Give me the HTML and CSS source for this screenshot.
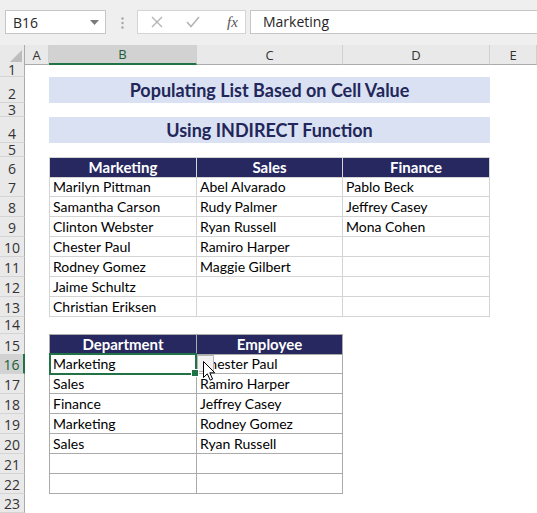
FILE: index.html
```html
<!DOCTYPE html>
<html lang="en">
<head>
    <meta charset="UTF-8">
    <title>Populating List Based on Cell Value</title>
    <link rel="stylesheet" href="styles.css">
</head>
<body>
    <!-- Barra de fórmulas -->
    <div class="toolbar">
        <div class="namebox">
            <span>B16</span>
            <svg width="9" height="5" viewBox="0 0 9 5"><path d="M0 0 L9 0 L4.5 5 Z" fill="#7a7a7a"/></svg>
        </div>
        <svg class="dots" width="3" height="12" viewBox="0 0 3 12">
            <circle cx="1.5" cy="1.5" r="1.2" fill="#a6a6a6"/>
            <circle cx="1.5" cy="6" r="1.2" fill="#a6a6a6"/>
            <circle cx="1.5" cy="10.5" r="1.2" fill="#a6a6a6"/>
        </svg>
        <div class="fxbox">
            <svg width="12" height="12" viewBox="0 0 12 12"><path d="M1 1 L11 11 M11 1 L1 11" stroke="#b4b4b4" stroke-width="1.4" fill="none"/></svg>
            <svg width="14" height="12" viewBox="0 0 14 12"><path d="M1 6 L5 10.5 L13 1" stroke="#b4b4b4" stroke-width="1.6" fill="none"/></svg>
            <span class="fx">fx</span>
        </div>
        <div class="formula">Marketing</div>
    </div>

    <!-- Hoja de cálculo -->
    <div class="sheet">
        <div class="row hh">
            <div class="ch corner">
                <svg width="12" height="12" viewBox="0 0 12 12"><path d="M12 0 L12 12 L0 12 Z" fill="#bdbdbd"/></svg>
            </div>
            <div class="ch">A</div>
            <div class="ch sel">B</div>
            <div class="ch">C</div>
            <div class="ch">D</div>
            <div class="ch">E</div>
        </div>

        <div class="row h13"><div class="rh">1</div></div>
        <div class="row h26">
            <div class="rh">2</div><div></div>
            <div class="title">Populating List Based on Cell Value</div>
        </div>
        <div class="row h14"><div class="rh">3</div></div>
        <div class="row h26">
            <div class="rh">4</div><div></div>
            <div class="title">Using INDIRECT Function</div>
        </div>
        <div class="row h14"><div class="rh">5</div></div>

        <!-- Tabla de empleados por departamento -->
        <div class="row">
            <div class="rh">6</div><div></div>
            <div class="c t1 hd first">Marketing</div>
            <div class="c t1 hd">Sales</div>
            <div class="c t1 hd">Finance</div>
        </div>
        <div class="row">
            <div class="rh">7</div><div></div>
            <div class="c t1 first">Marilyn Pittman</div>
            <div class="c t1">Abel Alvarado</div>
            <div class="c t1">Pablo Beck</div>
        </div>
        <div class="row">
            <div class="rh">8</div><div></div>
            <div class="c t1 first">Samantha Carson</div>
            <div class="c t1">Rudy Palmer</div>
            <div class="c t1">Jeffrey Casey</div>
        </div>
        <div class="row">
            <div class="rh">9</div><div></div>
            <div class="c t1 first">Clinton Webster</div>
            <div class="c t1">Ryan Russell</div>
            <div class="c t1">Mona Cohen</div>
        </div>
        <div class="row">
            <div class="rh">10</div><div></div>
            <div class="c t1 first">Chester Paul</div>
            <div class="c t1">Ramiro Harper</div>
            <div class="c t1"></div>
        </div>
        <div class="row">
            <div class="rh">11</div><div></div>
            <div class="c t1 first">Rodney Gomez</div>
            <div class="c t1">Maggie Gilbert</div>
            <div class="c t1"></div>
        </div>
        <div class="row">
            <div class="rh">12</div><div></div>
            <div class="c t1 first">Jaime Schultz</div>
            <div class="c t1"></div>
            <div class="c t1"></div>
        </div>
        <div class="row">
            <div class="rh">13</div><div></div>
            <div class="c t1 first">Christian Eriksen</div>
            <div class="c t1"></div>
            <div class="c t1"></div>
        </div>
        <div class="row h17"><div class="rh">14</div></div>

        <!-- Tabla de resultados -->
        <div class="row">
            <div class="rh">15</div><div></div>
            <div class="c t2 hd first">Department</div>
            <div class="c t2 hd">Employee</div>
        </div>
        <div class="row">
            <div class="rh sel">16</div><div></div>
            <div class="c t2 first active">Marketing</div>
            <div class="c t2 hover">Chester Paul
                <span class="dropbtn"></span>
                <svg class="cursor" width="13" height="20" viewBox="0 0 13 20">
                    <path d="M0.5 0.5 L0.5 16.5 L4.3 12.8 L7.2 19.2 L9.6 18.1 L6.8 11.8 L11.8 11.8 Z" fill="#fff" stroke="#000" stroke-width="1"/>
                </svg>
            </div>
        </div>
        <div class="row">
            <div class="rh">17</div><div></div>
            <div class="c t2 first">Sales</div>
            <div class="c t2">Ramiro Harper</div>
        </div>
        <div class="row">
            <div class="rh">18</div><div></div>
            <div class="c t2 first">Finance</div>
            <div class="c t2">Jeffrey Casey</div>
        </div>
        <div class="row">
            <div class="rh">19</div><div></div>
            <div class="c t2 first">Marketing</div>
            <div class="c t2">Rodney Gomez</div>
        </div>
        <div class="row">
            <div class="rh">20</div><div></div>
            <div class="c t2 first">Sales</div>
            <div class="c t2">Ryan Russell</div>
        </div>
        <div class="row">
            <div class="rh">21</div><div></div>
            <div class="c t2 first"></div>
            <div class="c t2"></div>
        </div>
        <div class="row">
            <div class="rh">22</div><div></div>
            <div class="c t2 first"></div>
            <div class="c t2"></div>
        </div>
        <div class="row h19"><div class="rh">23</div></div>
    </div>
</body>
</html>
```

FILE: styles.css
```css
* {
    margin: 0;
    padding: 0;
    box-sizing: border-box;
}

body {
    width: 537px;
    height: 513px;
    overflow: hidden;
    background-color: #fff;
    font-family: 'Open Sans', 'Noto Sans', sans-serif;
}

/* Barra de fórmulas */
.toolbar {
    height: 45px;
    background-color: #efefef;
    display: flex;
    align-items: flex-start;
    padding: 10px 0 0 5px;
}

.namebox {
    width: 101px;
    height: 24px;
    background-color: #fff;
    border: 1px solid #c6c6c6;
    display: flex;
    align-items: center;
    justify-content: space-between;
    padding: 0 6px 0 7px;
    font-size: 14px;
    color: #262626;
}

.dots {
    margin: 7px 13px 0 15px;
}

.fxbox {
    width: 109px;
    height: 24px;
    background-color: #fff;
    border: 1px solid #d4d4d4;
    display: flex;
    align-items: center;
    padding: 0 0 0 13px;
    gap: 23px;
}

.fx {
    font-family: 'Liberation Serif', serif;
    font-style: italic;
    font-size: 15px;
    color: #555;
    margin-left: 4px;
}

.formula {
    flex: 1;
    height: 24px;
    margin-left: 4px;
    background-color: #fff;
    border: 1px solid #c6c6c6;
    border-right: none;
    font-size: 14px;
    color: #262626;
    padding-left: 12px;
    line-height: 22px;
}

/* Rejilla */
.row {
    display: grid;
    grid-template-columns: 25px 24px 148px 146px 147px 47px;
    height: 20px;
}

.hh { height: 19px; }
.h13 { height: 13px; }
.h14 { height: 14px; }
.h17 { height: 17px; }
.h19 { height: 19px; }
.h26 { height: 26px; }

.ch {
    background-color: #e9e9e9;
    border-right: 1px solid #d0d0d0;
    border-bottom: 1px solid #ababab;
    display: flex;
    align-items: center;
    justify-content: center;
    font-size: 13px;
    color: #333;
}

.ch.corner {
    justify-content: flex-end;
    align-items: flex-end;
    padding: 0 2px 2px 0;
    border-right: 1px solid #ababab;
}

.ch.sel {
    background-color: #d2d2d2;
    border-bottom: 2px solid #217346;
    color: #1b5e38;
}

.rh {
    background-color: #e9e9e9;
    border-right: 1px solid #ababab;
    border-bottom: 1px solid #d4d4d4;
    display: flex;
    align-items: flex-end;
    justify-content: center;
    overflow: hidden;
    font-size: 14px;
    line-height: 12px;
    padding-bottom: 2px;
    color: #333;
}

.rh.sel {
    background-color: #d2d2d2;
    border-right: 2px solid #217346;
    color: #1b5e38;
}

.h13 .rh,
.h14 .rh {
    line-height: 10px;
    padding-bottom: 1px;
}

.title {
    grid-column: 3 / 6;
    background-color: #d9e1f2;
    display: flex;
    align-items: flex-end;
    justify-content: center;
    padding-bottom: 2px;
    font-family: 'Lato', sans-serif;
    font-weight: bold;
    font-size: 18px;
    color: #222659;
}

/* Celdas */
.c {
    display: flex;
    align-items: flex-end;
    padding: 0 0 1px 3px;
    font-family: 'Lato', sans-serif;
    font-size: 14px;
    color: #000;
    white-space: nowrap;
}

.t1 {
    border-right: 1px solid #d4d4d4;
    border-bottom: 1px solid #d4d4d4;
}

.t2 {
    border-right: 1px solid #ababab;
    border-bottom: 1px solid #ababab;
}

.t1.first { border-left: 1px solid #d4d4d4; }
.t2.first { border-left: 1px solid #ababab; }

.hd {
    background-color: #27285f;
    color: #fff;
    font-weight: bold;
    font-size: 15px;
    justify-content: center;
    padding-left: 0;
}

.t1.hd { border-top: 1px solid #d4d4d4; }
.t2.hd { border-top: 1px solid #ababab; }

/* Celda activa B16 */
.active {
    position: relative;
}

.active::after {
    content: '';
    position: absolute;
    top: -1px;
    left: -1px;
    right: -1px;
    bottom: -2px;
    border: 2px solid #217346;
}

.active::before {
    content: '';
    position: absolute;
    right: -3px;
    bottom: -4px;
    width: 6px;
    height: 6px;
    background-color: #217346;
    border: 1px solid #fff;
    z-index: 1;
}

/* Puntero del ratón sobre C16 */
.hover {
    position: relative;
}

.dropbtn {
    position: absolute;
    left: 0;
    top: 1px;
    width: 17px;
    height: 17px;
    background-color: #f2f2f2;
    border: 1px solid #b4b4b4;
}

.cursor {
    position: absolute;
    left: 6px;
    top: 7px;
}
```
